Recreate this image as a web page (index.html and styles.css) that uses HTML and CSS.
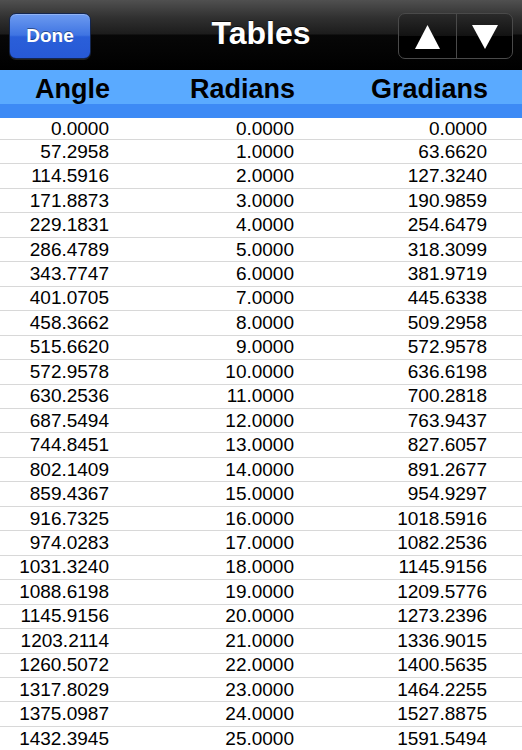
FILE: index.html
```html
<!DOCTYPE html>
<html>
<head>
<meta charset="utf-8">
<link rel="stylesheet" href="styles.css">
</head>
<body>
<div class="screen">
  <header class="navbar">
    <button class="done">Done</button>
    <h1 class="title">Tables</h1>
    <div class="segmented">
      <span class="seg seg-left"><svg width="25" height="24" viewBox="0 0 25 24"><polygon points="12.5,0 25,24 0,24" fill="#fff"/></svg></span>
      <span class="seg"><svg width="26" height="24" viewBox="0 0 26 24"><polygon points="0,0 26,0 13,24" fill="#fff"/></svg></span>
    </div>
  </header>
  <div class="colhead">
    <div class="colhead-row">
      <span>Angle</span><span>Radians</span><span>Gradians</span>
    </div>
    <div class="colhead-strip"></div>
  </div>
  <div class="table">
    <div class="row first"><span>0.0000</span><span>0.0000</span><span>0.0000</span></div>
    <div class="row"><span>57.2958</span><span>1.0000</span><span>63.6620</span></div>
    <div class="row"><span>114.5916</span><span>2.0000</span><span>127.3240</span></div>
    <div class="row"><span>171.8873</span><span>3.0000</span><span>190.9859</span></div>
    <div class="row"><span>229.1831</span><span>4.0000</span><span>254.6479</span></div>
    <div class="row"><span>286.4789</span><span>5.0000</span><span>318.3099</span></div>
    <div class="row"><span>343.7747</span><span>6.0000</span><span>381.9719</span></div>
    <div class="row"><span>401.0705</span><span>7.0000</span><span>445.6338</span></div>
    <div class="row"><span>458.3662</span><span>8.0000</span><span>509.2958</span></div>
    <div class="row"><span>515.6620</span><span>9.0000</span><span>572.9578</span></div>
    <div class="row"><span>572.9578</span><span>10.0000</span><span>636.6198</span></div>
    <div class="row"><span>630.2536</span><span>11.0000</span><span>700.2818</span></div>
    <div class="row"><span>687.5494</span><span>12.0000</span><span>763.9437</span></div>
    <div class="row"><span>744.8451</span><span>13.0000</span><span>827.6057</span></div>
    <div class="row"><span>802.1409</span><span>14.0000</span><span>891.2677</span></div>
    <div class="row"><span>859.4367</span><span>15.0000</span><span>954.9297</span></div>
    <div class="row"><span>916.7325</span><span>16.0000</span><span>1018.5916</span></div>
    <div class="row"><span>974.0283</span><span>17.0000</span><span>1082.2536</span></div>
    <div class="row"><span>1031.3240</span><span>18.0000</span><span>1145.9156</span></div>
    <div class="row"><span>1088.6198</span><span>19.0000</span><span>1209.5776</span></div>
    <div class="row"><span>1145.9156</span><span>20.0000</span><span>1273.2396</span></div>
    <div class="row"><span>1203.2114</span><span>21.0000</span><span>1336.9015</span></div>
    <div class="row"><span>1260.5072</span><span>22.0000</span><span>1400.5635</span></div>
    <div class="row"><span>1317.8029</span><span>23.0000</span><span>1464.2255</span></div>
    <div class="row"><span>1375.0987</span><span>24.0000</span><span>1527.8875</span></div>
    <div class="row"><span>1432.3945</span><span>25.0000</span><span>1591.5494</span></div>
  </div>
</div>
</body>
</html>
```
FILE: styles.css
```css
* { box-sizing: border-box; }
html, body { margin: 0; padding: 0; background: #fff; }
body { font-family: "Liberation Sans", Arial, sans-serif; }
.screen { width: 522px; height: 750px; overflow: hidden; background: #fff; }

.navbar {
  height: 70px;
  display: grid;
  grid-template-columns: 1fr auto 1fr;
  align-items: center;
  padding: 0 9px;
  background: linear-gradient(#505050 0px, #303030 18px, #1c1c1c 34px, #070707 35px, #000 70px);
}
.done {
  justify-self: start;
  width: 82px;
  height: 46px;
  margin-top: 2px;
  border: 1px solid #14264f;
  border-radius: 7px;
  background: linear-gradient(#6d9bf0 0%, #3f74e2 48%, #2a5fd9 52%, #2759d6 100%);
  box-shadow: inset 0 1px 0 rgba(255,255,255,0.25), 0 1px 0 rgba(255,255,255,0.12);
  color: #fff;
  font-family: "Liberation Sans", Arial, sans-serif;
  font-weight: bold;
  font-size: 19px;
  padding: 0;
  text-shadow: 0 -1px 0 rgba(0,0,0,0.4);
}
.title {
  margin: 0;
  color: #fff;
  font-size: 32px;
  font-weight: bold;
  line-height: 36px;
  margin-bottom: 4px;
  text-shadow: 0 -1px 0 rgba(0,0,0,0.6);
}
.segmented {
  justify-self: end;
  display: flex;
  width: 115px;
  height: 46px;
  margin-top: 2px;
  border: 1px solid #4a4a4a;
  border-radius: 7px;
  background: linear-gradient(#2a2a2a 0%, #121212 50%, #000 51%, #000 100%);
  overflow: hidden;
}
.seg {
  flex: 1;
  display: flex;
  align-items: center;
  justify-content: center;
  padding-top: 1px;
}
.seg-left { flex: 0 0 58px; border-right: 1px solid #4a4a4a; }

.colhead {
  height: 48px;
  display: flex;
  flex-direction: column;
}
.colhead-row {
  height: 34px;
  padding-top: 3px;
  background: #5aaaff;
  display: grid;
  grid-template-columns: 110px 185px 193px 1fr;
  font-size: 27px;
  font-weight: bold;
  line-height: 32px;
  color: #000;
}
.colhead-row span { text-align: right; }
.colhead-strip {
  flex: 1;
  background: #3d8af5;
}

.table { display: flex; flex-direction: column; }
.row {
  height: 24.46px;
  border-top: 1px solid #d8d8d8;
  display: grid;
  grid-template-columns: 109px 185px 193px 1fr;
  align-items: center;
  font-size: 19px;
  line-height: 22px;
  color: #000;
}
.row.first { height: 21px; border-top: none; }
.row span { text-align: right; }
```
